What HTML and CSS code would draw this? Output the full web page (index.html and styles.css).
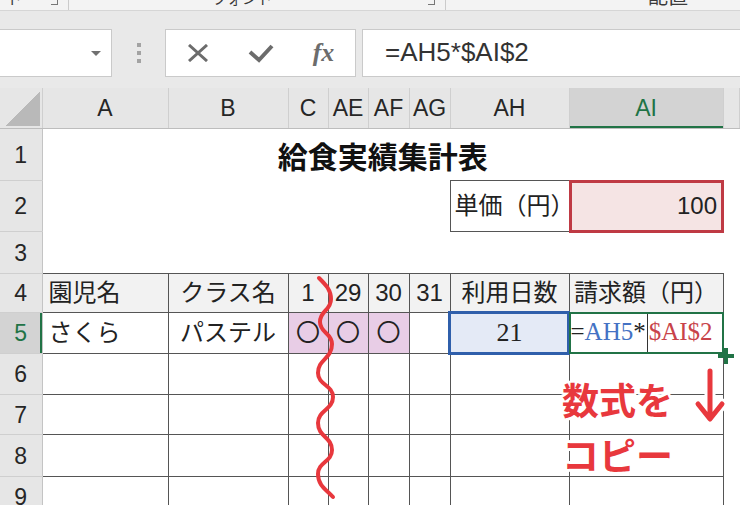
FILE: index.html
```html
<!DOCTYPE html>
<html lang="ja">
<head>
    <meta charset="UTF-8">
    <title>給食実績集計表</title>
    <link rel="stylesheet" href="styles.css">
</head>
<body>
    <!-- リボン下端（見切れ） -->
    <div class="ribbon">
        <div class="rb-group rb-clipboard"><span class="rb-label">ード</span><span class="rb-launch"></span></div>
        <div class="rb-group rb-font"><span class="rb-label">フォント</span><span class="rb-launch"></span></div>
        <div class="rb-group rb-align"><span class="rb-label">配置</span></div>
    </div>

    <!-- 数式バー -->
    <div class="formula-bar">
        <div class="name-box"><span class="dropdown"></span></div>
        <div class="grip"><i></i><i></i><i></i></div>
        <div class="fx-buttons">
            <svg width="22" height="18" viewBox="0 0 22 18"><path d="M2 1 L20 17 M20 1 L2 17" stroke="#6c6c6c" stroke-width="3" fill="none"/></svg>
            <svg width="26" height="20" viewBox="0 0 26 20"><path d="M2 9 L11 17 L24 3" stroke="#6c6c6c" stroke-width="4" fill="none"/></svg>
            <span class="fx">fx</span>
        </div>
        <div class="formula-input">=AH5*$AI$2</div>
    </div>

    <!-- シート -->
    <div class="sheet-wrap">
        <table class="sheet">
            <colgroup>
                <col class="w-hd"><col class="w-a"><col class="w-b"><col class="w-n"><col class="w-n">
                <col class="w-n1"><col class="w-n1"><col class="w-ah"><col class="w-ai"><col>
            </colgroup>
            <tr class="col-head">
                <th class="corner"><span class="tri"></span></th>
                <th>A</th><th>B</th><th>C</th><th>AE</th><th>AF</th><th>AG</th><th>AH</th>
                <th class="sel">AI</th><th></th>
            </tr>
            <tr class="r1">
                <th class="row-head">1</th>
                <td colspan="8" class="title">給食実績集計表</td><td></td>
            </tr>
            <tr class="r2">
                <th class="row-head">2</th>
                <td colspan="6"></td>
                <td class="cell label">単価（円）</td>
                <td class="price">100</td><td></td>
            </tr>
            <tr class="r3">
                <th class="row-head">3</th>
                <td colspan="9"></td>
            </tr>
            <tr class="r4">
                <th class="row-head">4</th>
                <td class="cell hd left">園児名</td>
                <td class="cell hd">クラス名</td>
                <td class="cell hd">1</td>
                <td class="cell hd">29</td>
                <td class="cell hd">30</td>
                <td class="cell hd">31</td>
                <td class="cell hd">利用日数</td>
                <td class="cell hd">請求額（円）</td>
                <td></td>
            </tr>
            <tr class="r5">
                <th class="row-head sel">5</th>
                <td class="cell left">さくら</td>
                <td class="cell">パステル</td>
                <td class="cell mark">〇</td>
                <td class="cell mark">〇</td>
                <td class="cell mark">〇</td>
                <td class="cell"></td>
                <td class="cell active">21</td>
                <td class="cell editing">=<span class="ref-blue">AH5</span>*<span class="caret"></span><span class="ref-red">$AI$2</span><span class="fill-handle"></span></td>
                <td></td>
            </tr>
            <tr class="r6">
                <th class="row-head">6</th>
                <td class="cell"></td><td class="cell"></td><td class="cell"></td><td class="cell"></td>
                <td class="cell"></td><td class="cell"></td><td class="cell"></td><td class="cell"></td><td></td>
            </tr>
            <tr class="r7">
                <th class="row-head">7</th>
                <td class="cell"></td><td class="cell"></td><td class="cell"></td><td class="cell"></td>
                <td class="cell"></td><td class="cell"></td><td class="cell"></td><td class="cell"></td><td></td>
            </tr>
            <tr class="r8">
                <th class="row-head">8</th>
                <td class="cell"></td><td class="cell"></td><td class="cell"></td><td class="cell"></td>
                <td class="cell"></td><td class="cell"></td><td class="cell"></td><td class="cell"></td><td></td>
            </tr>
            <tr class="r9">
                <th class="row-head">9</th>
                <td class="cell"></td><td class="cell"></td><td class="cell"></td><td class="cell"></td>
                <td class="cell"></td><td class="cell"></td><td class="cell"></td><td class="cell"></td><td></td>
            </tr>
        </table>

        <!-- 省略の波線と矢印 -->
        <svg class="overlay" width="740" height="417" viewBox="0 88 740 417">
            <path d="M319 278 C326 285 331 290 331 299 C331 311 320 310 320 322 C320 333 332 333 332 344 C332 359 318 359 318 373 C318 385 333 385 333 397 C333 410 318 410 318 423 C318 437 332 437 332 450 C332 462 318 462 318 474 C318 486 327 490 333 497"
                  stroke="#e8383d" stroke-width="4" fill="none" stroke-linecap="round"/>
            <path d="M710 371 V418 M698 404 L710 419 L722 404" stroke="#fff" stroke-width="11" fill="none" stroke-linecap="round" stroke-linejoin="round"/>
            <path d="M710 371 V418 M698 404 L710 419 L722 404" stroke="#e8383d" stroke-width="5" fill="none" stroke-linecap="round" stroke-linejoin="round"/>
        </svg>

        <div class="note">数式を<br>コピー</div>
    </div>
</body>
</html>
```

FILE: styles.css
```css
body {
    margin: 0;
    width: 740px;
    height: 505px;
    overflow: hidden;
    background: #fff;
    font-family: "Liberation Sans", "Noto Sans CJK JP", sans-serif;
}

/* リボン */
.ribbon {
    height: 10px;
    background: #f3f3f3;
    border-bottom: 1px solid #d6d6d6;
    display: flex;
    overflow: hidden;
}

.rb-group {
    display: flex;
    align-items: flex-start;
    border-right: 1px solid #cbcbcb;
    box-sizing: border-box;
}

.rb-clipboard {
    width: 69px;
}

.rb-font {
    width: 377px;
}

.rb-align {
    border-right: none;
    flex: 1;
}

.rb-label {
    font-family: "Noto Sans CJK JP", sans-serif;
    font-size: 15px;
    line-height: 20px;
    margin-top: -12px;
    color: #3a3a3a;
    white-space: nowrap;
}

.rb-clipboard .rb-label {
    margin-left: -8px;
}

.rb-font .rb-label {
    margin-left: 143px;
}

.rb-align .rb-label {
    margin-left: 202px;
    font-size: 20px;
    margin-top: -14px;
}

.rb-launch {
    width: 6px;
    height: 5px;
    border-right: 1px solid #777;
    border-bottom: 1px solid #777;
    margin-top: -1px;
    margin-left: auto;
    margin-right: 10px;
}

/* 数式バー */
.formula-bar {
    height: 77px;
    box-sizing: border-box;
    padding-top: 18px;
    background: #e9e9e9;
    display: flex;
    align-items: flex-start;
}

.name-box {
    width: 113px;
    height: 48px;
    margin-left: -1px;
    box-sizing: border-box;
    background: #fff;
    border: 1px solid #cacaca;
    display: flex;
    align-items: center;
    justify-content: flex-end;
    padding-right: 10px;
}

.dropdown {
    border-left: 5px solid transparent;
    border-right: 5px solid transparent;
    border-top: 5px solid #707070;
}

.grip {
    width: 53px;
    height: 48px;
    display: flex;
    flex-direction: column;
    align-items: center;
    justify-content: center;
    gap: 4px;
}

.grip i {
    width: 4px;
    height: 4px;
    background: #a3a3a3;
}

.fx-buttons {
    width: 191px;
    height: 48px;
    box-sizing: border-box;
    background: #fff;
    border: 1px solid #cacaca;
    display: grid;
    grid-template-columns: repeat(3, 1fr);
    align-items: center;
    justify-items: center;
}

.fx {
    font-family: "Liberation Serif", serif;
    font-style: italic;
    font-weight: 700;
    font-size: 26px;
    color: #6c6c6c;
    line-height: 30px;
}

.formula-input {
    flex: 1;
    height: 48px;
    margin-left: 6px;
    margin-right: -1px;
    box-sizing: border-box;
    background: #fff;
    border: 1px solid #cacaca;
    padding-left: 22px;
    font-size: 26px;
    line-height: 45px;
    color: #333;
}

/* シート */
.sheet-wrap {
    position: relative;
}

.sheet {
    border-collapse: collapse;
    table-layout: fixed;
    width: 740px;
    font-size: 24px;
    color: #222;
}

.w-hd { width: 42px; }
.w-a { width: 126px; }
.w-b { width: 120px; }
.w-n { width: 40px; }
.w-n1 { width: 41px; }
.w-ah { width: 119px; }
.w-ai { width: 154px; }

.sheet th,
.sheet td {
    padding: 0;
    white-space: nowrap;
    line-height: 30px;
    text-align: center;
}

.col-head th {
    height: 40px;
    background: #e6e6e6;
    font-weight: normal;
    font-size: 23px;
    color: #262626;
    border-right: 1px solid #cfcfcf;
    border-bottom: 1px solid #bdbdbd;
}

.col-head th.sel {
    background: #d3d3d3;
    color: #217346;
    box-shadow: inset 0 -2px #217346;
}

.col-head th.corner {
    vertical-align: bottom;
}

.tri {
    display: block;
    width: 35px;
    height: 34px;
    margin: 0 2px 2px auto;
    background: linear-gradient(to bottom right, transparent 50%, #b9b9b9 50%);
}

.row-head {
    background: #e6e6e6;
    font-weight: normal;
    font-size: 23px;
    color: #262626;
    border-right: 1px solid #c4c4c4;
    border-bottom: 1px solid #cfcfcf;
}

.row-head.sel {
    background: #d3d3d3;
    color: #217346;
    box-shadow: inset -2px 0 #217346;
}

.r1 { height: 52px; }
.r2 { height: 51px; }
.r3 { height: 42px; }
.r4 { height: 39px; }
.r5 { height: 41px; }
.r6 { height: 41px; }
.r7 { height: 40px; }
.r8 { height: 42px; }
.r9 { height: 40px; }

.title {
    font-family: "Noto Sans CJK JP", sans-serif;
    font-weight: 700;
    font-size: 30px;
    color: #111;
}

.cell {
    border: 1px solid #555;
}

.sheet .left {
    text-align: left;
    padding-left: 6px;
}

.sheet .label {
    text-align: left;
    padding-left: 4px;
}

.hd {
    background: #f2f2f2;
}

.sheet .price {
    background: #f5e4e4;
    text-align: right;
    padding-right: 6px;
    position: relative;
}

.price::after {
    content: "";
    position: absolute;
    top: -1px;
    left: -1px;
    right: -1px;
    bottom: -1px;
    border: 3px solid #bf3a44;
}

.mark {
    background: #e8cde6;
}

.active {
    background: #e4eaf6;
    font-family: "Liberation Serif", serif;
    font-size: 26px;
    position: relative;
}

.active::after {
    content: "";
    position: absolute;
    top: -2px;
    left: -3px;
    right: -1px;
    bottom: -2px;
    border: 3px solid #2f5fab;
}

.sheet .editing {
    font-family: "Liberation Serif", serif;
    font-size: 25px;
    text-align: left;
    padding-left: 1px;
    position: relative;
}

.editing::after {
    content: "";
    position: absolute;
    top: -1px;
    left: -1px;
    right: -1px;
    bottom: -1px;
    border: 2px solid #217346;
}

.ref-blue {
    color: #4472c4;
}

.ref-red {
    color: #c8434a;
}

.caret {
    display: inline-block;
    width: 1px;
    height: 40px;
    margin: -5px 1px;
    background: #333;
    vertical-align: middle;
}

.fill-handle {
    position: absolute;
    right: -11px;
    bottom: -11px;
    width: 16px;
    height: 16px;
    z-index: 1;
}

.fill-handle::before,
.fill-handle::after {
    content: "";
    position: absolute;
    background: #217346;
}

.fill-handle::before {
    left: 0;
    right: 0;
    top: 6px;
    height: 4px;
}

.fill-handle::after {
    top: 0;
    bottom: 0;
    left: 6px;
    width: 4px;
}

/* 注記 */
.overlay {
    position: absolute;
    top: 0;
    left: 0;
    pointer-events: none;
}

.note {
    position: absolute;
    left: 562px;
    top: 284px;
    font-family: "Noto Sans CJK JP", sans-serif;
    font-weight: 700;
    font-size: 37px;
    line-height: 55px;
    color: #e8383d;
    text-shadow: -2px -2px 0 #fff, 2px -2px 0 #fff, -2px 2px 0 #fff, 2px 2px 0 #fff,
                 0 -3px 0 #fff, 0 3px 0 #fff, -3px 0 0 #fff, 3px 0 0 #fff;
}
```
